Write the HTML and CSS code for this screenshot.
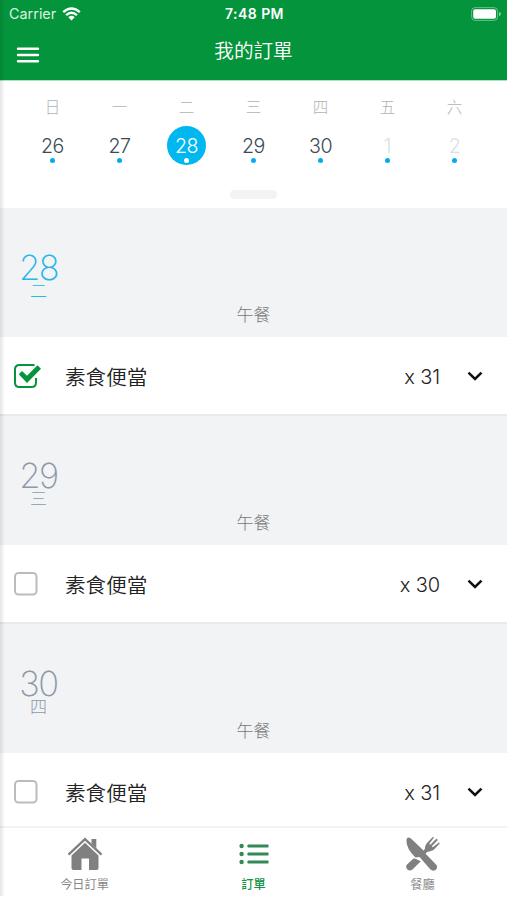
FILE: index.html
```html
<!DOCTYPE html>
<html lang="zh-Hant">
<head>
<meta charset="utf-8">
<title>我的訂單</title>
<link rel="stylesheet" href="styles.css">
</head>
<body>
<div class="app">
  <header class="header">
    <div class="status">
      <div class="carrier"><span>Carrier</span>
        <svg width="19" height="14" viewBox="0 0 19 14" fill="none" stroke="#fff" stroke-width="2.4"><path d="M1.2 5.1Q9.5-2.3 17.8 5.1M4.1 8.1Q9.500 3.400 14.900 8.100"/><path d="M6.300 10.200Q9.500 7.500 12.700 10.200L9.500 13.600Z" fill="#fff" stroke="none"/></svg>
      </div>
      <div class="clock">7:48 PM</div>
      <svg class="battery" width="30" height="14" viewBox="0 0 30 14"><rect x=".6" y=".6" width="26" height="12.800" rx="3.500" fill="none" stroke="#fff" stroke-opacity=".4"/><rect x="2.200" y="2.200" width="22.800" height="9.600" rx="2" fill="#fff"/><path d="M28 4.800Q30 5.500 30 7T28 9.200Z" fill="#fff" fill-opacity=".5"/></svg>
    </div>
    <div class="nav">
      <svg class="menu" width="24" height="16" viewBox="0 0 24 16" stroke="#fff" stroke-width="2.400" stroke-linecap="round"><path d="M2 1.700H22M2 8H22M2 14.300H22"/></svg>
      <h1>我的訂單</h1>
    </div>
  </header>

  <section class="calendar">
    <div class="week">
      <div class="day"><span class="name">日</span><span class="date">26</span></div>
      <div class="day"><span class="name">一</span><span class="date">27</span></div>
      <div class="day"><span class="name">二</span><span class="date selected">28</span></div>
      <div class="day"><span class="name">三</span><span class="date">29</span></div>
      <div class="day"><span class="name">四</span><span class="date">30</span></div>
      <div class="day"><span class="name">五</span><span class="date muted">1</span></div>
      <div class="day"><span class="name">六</span><span class="date muted">2</span></div>
    </div>
    <div class="knob"></div>
  </section>

  <main class="agenda">
    <section class="group">
      <div class="group-head">
        <div class="stamp today"><span class="num">28</span><span class="wd">二</span></div>
        <div class="meal">午餐</div>
      </div>
      <div class="order">
        <svg class="check" width="30" height="26" viewBox="0 0 30 26"><path d="M21.500 2H6.500Q2 2 2 6.500V19.500Q2 24 6.500 24H18.500Q23 24 23 19.500V15" fill="none" stroke="#04943b" stroke-width="2"/><path d="M5.800 11.200L9 8L14 12.800L24.500 2.300L28 5.700L14 20Z" fill="#04943b"/></svg>
        <span class="dish">素食便當</span><span class="qty">x 31</span>
        <svg class="chev" width="16" height="10" viewBox="0 0 16 10"><path d="M1.500 1.600L8 8L14.500 1.600" fill="none" stroke="#111" stroke-width="2.500"/></svg>
      </div>
    </section>
    <section class="group">
      <div class="group-head">
        <div class="stamp"><span class="num">29</span><span class="wd">三</span></div>
        <div class="meal">午餐</div>
      </div>
      <div class="order">
        <svg class="check" width="30" height="26" viewBox="0 0 30 26"><rect x="2" y="2" width="21.500" height="21.500" rx="3.500" fill="none" stroke="#bcbcbc" stroke-width="2"/></svg>
        <span class="dish">素食便當</span><span class="qty">x 30</span>
        <svg class="chev" width="16" height="10" viewBox="0 0 16 10"><path d="M1.500 1.600L8 8L14.500 1.600" fill="none" stroke="#111" stroke-width="2.500"/></svg>
      </div>
    </section>
    <section class="group">
      <div class="group-head">
        <div class="stamp"><span class="num">30</span><span class="wd">四</span></div>
        <div class="meal">午餐</div>
      </div>
      <div class="order">
        <svg class="check" width="30" height="26" viewBox="0 0 30 26"><rect x="2" y="2" width="21.500" height="21.500" rx="3.500" fill="none" stroke="#bcbcbc" stroke-width="2"/></svg>
        <span class="dish">素食便當</span><span class="qty">x 31</span>
        <svg class="chev" width="16" height="10" viewBox="0 0 16 10"><path d="M1.500 1.600L8 8L14.500 1.600" fill="none" stroke="#111" stroke-width="2.500"/></svg>
      </div>
    </section>
  </main>

  <nav class="tabs">
    <a class="tab">
      <svg width="36" height="36" viewBox="0 0 36 36"><path d="M1.500 18.700L18 3.200L34.500 18.700" fill="none" stroke="#808080" stroke-width="2.300"/><path d="M24.500 3H29.300V12.300L24.500 7.800ZM18 6.800L31.500 19.500V32Q31.500 34 29.500 34H22V22.500H14.500V34H6.500Q4.500 34 4.500 32V19.500Z" fill="#808080"/></svg>
      <span>今日訂單</span>
    </a>
    <a class="tab active">
      <svg width="36" height="36" viewBox="0 0 36 36" fill="#338a57"><circle cx="5.600" cy="10" r="2.200"/><circle cx="5.600" cy="18" r="2.200"/><circle cx="5.600" cy="26" r="2.200"/><path d="M12 8.500H32.500V11.500H12Q10.500 10 12 8.500M12 16.500H32.500V19.500H12Q10.500 18 12 16.500M12 24.500H32.500V27.500H12Q10.500 26 12 24.500"/></svg>
      <span>訂單</span>
    </a>
    <a class="tab">
      <svg width="36" height="36" viewBox="0 0 36 36" fill="#808080"><path d="M2.500 1.800Q4.500.8 6.500 3L18.500 14.500Q20.500 13.500 20 10.800L21.500 7.500L27.500 1.200Q28.500.5 29 1.500L24.300 7.800L25.300 8.800L31.500 2.600L32.800 3.900L26.800 10.200L27.800 11.200L33.900 6.500Q35.300 6.900 34.300 8L28.500 14L24.500 15.500Q22 15.300 20.600 17.800L31.500 29Q33 32 30.500 34Q28 35.500 25.500 33.500L14.500 21L10.500 21.500Q1 12.500 1.400 4Q1.600 2.500 2.500 1.800Z"/><path d="M10.300 22.800L14.200 24.500L15.800 25.300L7.500 33.500Q5 35.500 2.500 33.500Q0 31 2 28.500L8.500 22.500Z"/></svg>
      <span>餐廳</span>
    </a>
  </nav>
</div>
</body>
</html>
```
FILE: styles.css
```css
* { box-sizing: border-box; }
body {
  margin: 0;
  background: #fff;
  font-family: Inter, "Noto Sans CJK TC", sans-serif;
}
.app {
  position: relative;
  height: 896px;
  display: flex;
  flex-direction: column;
  overflow: hidden;
}
.app::after {
  content: "";
  position: absolute;
  inset: 0 auto 0 0;
  width: 5px;
  background: linear-gradient(90deg, rgba(0,0,0,.1), rgba(0,0,0,0));
}
svg { display: block; flex: none; }

.header {
  height: 81px;
  flex: none;
  background: #04943b;
  border-bottom: 1px solid #a9e2bd;
  color: #fff;
}
.status {
  display: grid;
  grid-template-columns: 1fr auto 1fr;
  align-items: center;
  height: 27px;
  padding: 0 6px 0 9px;
}
.carrier {
  display: flex;
  align-items: center;
  gap: 6px;
  font-size: 14.4px;
  font-weight: 400;
  color: #d9f1e1;
}
.clock { font-size: 14px; font-weight: 600; letter-spacing: .45px; margin-right: 1px; }
.battery { justify-self: end; }
.nav {
  display: grid;
  grid-template-columns: 1fr auto 1fr;
  align-items: center;
  height: 48px;
  padding: 0 16px;
}
.menu { margin-top: 7px; }
.nav h1 { margin: 0; font-size: 19.6px; font-weight: 350; line-height: 28px; }

.calendar {
  height: 127px;
  flex: none;
  display: flex;
  flex-direction: column;
  justify-content: space-between;
  align-items: center;
  padding: 17px 0 9px;
}
.week {
  width: 469px;
  display: grid;
  grid-template-columns: repeat(7, 1fr);
}
.day { display: flex; flex-direction: column; align-items: center; }
.name { height: 20px; line-height: 20px; font-size: 15.500px; font-weight: 300; color: #acb3b9; }
.date {
  width: 39px;
  height: 39px;
  margin-top: 8px;
  border-radius: 50%;
  display: flex;
  flex-direction: column;
  align-items: center;
  padding-top: 10px;
  gap: 2px;
  font-size: 19.600px;
  line-height: 20px;
  font-weight: 300;
  letter-spacing: -.4px;
  color: #3c4a56;
}
.date::after {
  content: "";
  width: 5px;
  height: 5px;
  border-radius: 50%;
  background: #00adf0;
}
.date.selected { background: #00b7ef; color: #fff; }
.date.selected::after { background: #fff; }
.date.muted { color: #d9e1e8; }
.knob { width: 47px; height: 9px; border-radius: 5px; background: #f2f3f3; }

.agenda { flex: 1; min-height: 0; overflow: hidden; }
.group { height: 208px; }
.group-head {
  height: 129px;
  background: #f1f3f5;
  display: flex;
  flex-direction: column;
  justify-content: space-between;
  padding: 47px 0 11px;
}
.stamp {
  width: 77px;
  display: flex;
  flex-direction: column;
  align-items: center;
  color: #8b99ab;
}
.stamp.today { color: #27b7e8; }
.num { font-size: 34.500px; line-height: 26px; font-weight: 200; letter-spacing: -1.500px; }
.wd { font-size: 17px; line-height: 18px; font-weight: 300; margin-top: 1px; }
.meal { text-align: center; font-size: 17px; line-height: 22px; font-weight: 300; color: #777; }
.order {
  height: 79px;
  display: flex;
  align-items: center;
  padding: 1px 24px 0 13px;
  background: #fff;
  border-bottom: 2px solid #e8e9ea;
  color: #222;
}
.dish { flex: 1; margin: -1px 0 0 22px; font-size: 20.600px; font-weight: 350; }
.qty { font-size: 20px; font-weight: 350; letter-spacing: -.1px; margin: 1px 27px 0 0; }

.tabs {
  height: 70px;
  flex: none;
  display: grid;
  grid-template-columns: repeat(3, 1fr);
  background: #fff;
  border-top: 2px solid #f2f2f2;
}
.tab {
  display: flex;
  flex-direction: column;
  align-items: center;
  padding-top: 8px;
  gap: 5px;
  font-size: 12.200px;
  line-height: 16px;
  color: #888;
}
.tab.active { color: #159447; font-weight: 500; }
```
